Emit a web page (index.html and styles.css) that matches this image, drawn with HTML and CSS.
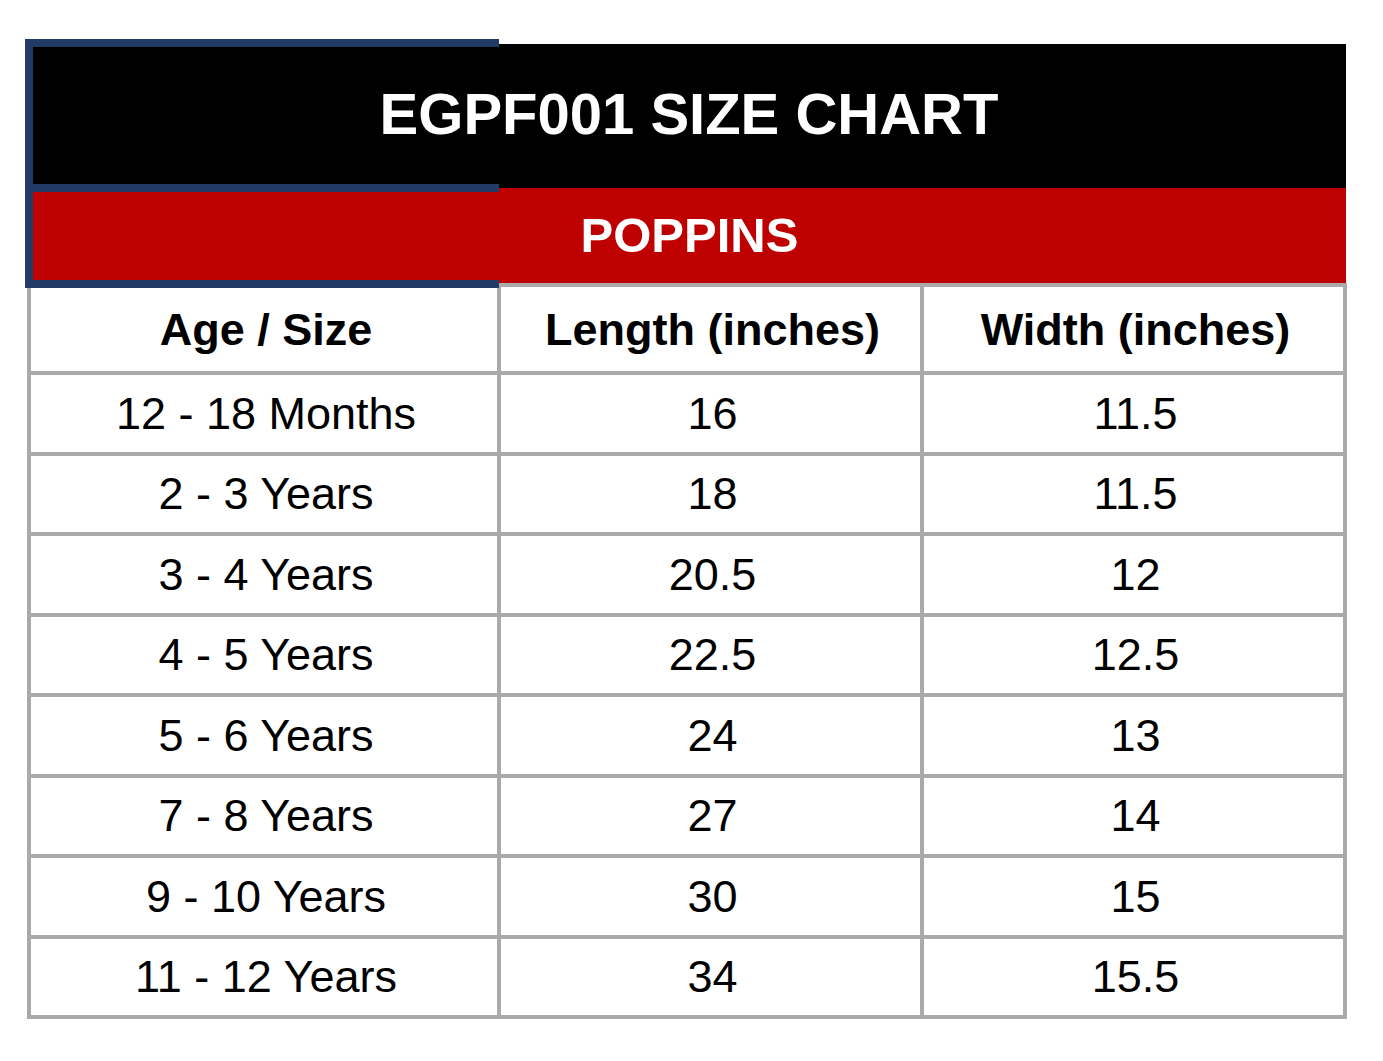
FILE: index.html
```html
<!DOCTYPE html>
<html lang="en">
<head>
<meta charset="utf-8">
<title>EGPF001 Size Chart</title>
<link rel="stylesheet" href="styles.css">
</head>
<body>
<div class="chart">
  <div class="title-band"><h1 class="title">EGPF001 SIZE CHART</h1></div>
  <div class="sub-band"><h2 class="subtitle">POPPINS</h2></div>
  <div class="frame"><div class="frame-mid"></div></div>
  <div class="grid">
    <div class="cell head">Age / Size</div>
    <div class="cell head">Length (inches)</div>
    <div class="cell head">Width (inches)</div>

    <div class="cell">12 - 18 Months</div><div class="cell">16</div><div class="cell">11.5</div>
    <div class="cell">2 - 3 Years</div><div class="cell">18</div><div class="cell">11.5</div>
    <div class="cell">3 - 4 Years</div><div class="cell">20.5</div><div class="cell">12</div>
    <div class="cell">4 - 5 Years</div><div class="cell">22.5</div><div class="cell">12.5</div>
    <div class="cell">5 - 6 Years</div><div class="cell">24</div><div class="cell">13</div>
    <div class="cell">7 - 8 Years</div><div class="cell">27</div><div class="cell">14</div>
    <div class="cell">9 - 10 Years</div><div class="cell">30</div><div class="cell">15</div>
    <div class="cell">11 - 12 Years</div><div class="cell">34</div><div class="cell">15.5</div>
  </div>
</div>
</body>
</html>
```
FILE: styles.css
```css
html, body {
  margin: 0;
  padding: 0;
  background: #ffffff;
}

body {
  font-family: "Liberation Sans", Arial, Helvetica, sans-serif;
  color: #000;
}

.chart {
  position: relative;
  width: 1320px;
  margin: 44px 0 0 27px;
}

.title-band {
  height: 144px;
  margin-right: 1px;
  background: #000;
  display: flex;
  align-items: center;
  justify-content: center;
}

.title {
  margin: 0 0 4px 0;
  font-size: 58px;
  font-weight: 700;
  color: #fff;
  line-height: 1;
  padding-left: 5px;
}

.sub-band {
  height: 95px;
  margin-right: 1px;
  background: #bf0000;
  display: flex;
  align-items: center;
  justify-content: center;
}

.subtitle {
  margin: 0;
  font-size: 49px;
  font-weight: 700;
  color: #fff;
  line-height: 1;
  padding-left: 6px;
}

.frame {
  position: absolute;
  left: -2px;
  top: -5px;
  width: 466px;
  height: 233px;
  border-left: 8px solid #213a66;
  border-top: 8px solid #213a66;
  border-bottom: 8px solid #213a66;
}

.frame-mid {
  position: absolute;
  left: 0;
  right: 0;
  top: 137px;
  height: 8px;
  background: #213a66;
}

.grid {
  display: grid;
  grid-template-columns: 466px 419px 419px;
  grid-template-rows: 84px repeat(8, 76.5px);
  gap: 4px;
  padding: 4px;
  background: #aaaaaa;
}

.cell {
  background: #fff;
  display: flex;
  align-items: center;
  justify-content: center;
  padding-left: 4px;
  font-size: 45px;
  line-height: 1;
}

.head {
  font-weight: 700;
}
```
